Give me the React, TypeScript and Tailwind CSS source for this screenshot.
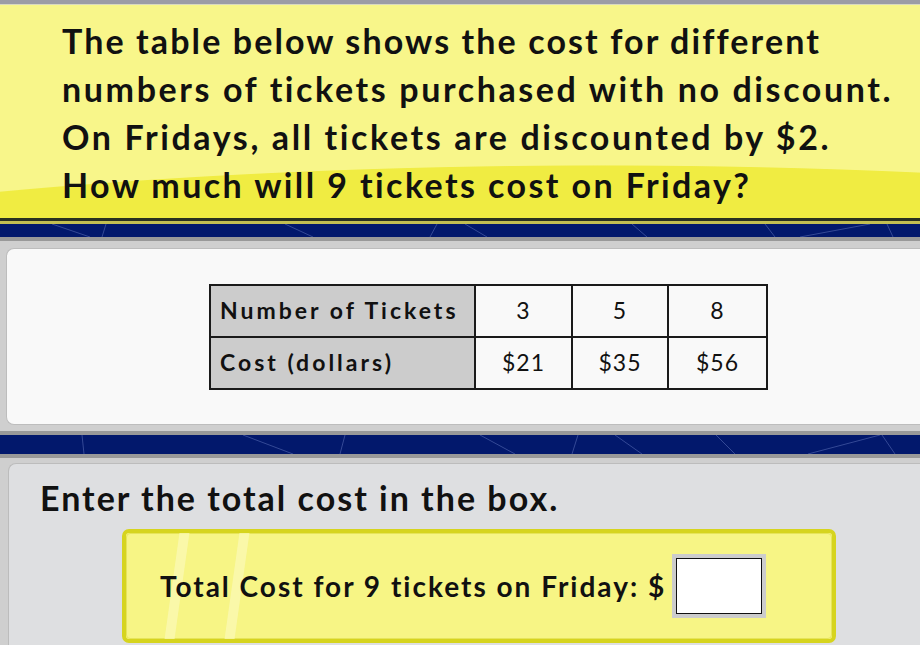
import React from "react";

function NavyStrip({ h, lines }: { h: number; lines: [number, number, number, number][] }) {
  return (
    <div className="w-full bg-[#02186c]" style={{ height: h }}>
      <svg width="920" height={h} viewBox={`0 0 920 ${h}`} className="block">
        {lines.map((l, i) => (
          <line key={i} x1={l[0]} y1={l[1]} x2={l[2]} y2={l[3]} stroke="#4a5ea8" strokeWidth="1" opacity="0.7" />
        ))}
      </svg>
    </div>
  );
}

export default function App() {
  const font = { fontFamily: "Lato, 'Open Sans', sans-serif" };
  return (
    <div className="w-[920px] h-[645px] overflow-hidden bg-[#cfcfcf]" style={font}>
      <div className="h-[4px] bg-[#9c9ca6]" />
      <div className="h-[1px] bg-[#d9d9c0]" />
      <div className="h-[213px] pl-[62px] pt-[12px] bg-[radial-gradient(ellipse_1300px_232px_at_600px_392px,#f0ec42_99.6%,#f8f68a_100%)] text-[#111] font-bold text-[34px] leading-[48px] tracking-[2.1px]">
        <div>The table below shows the cost for different</div>
        <div className="tracking-[2.6px]">numbers of tickets purchased with no discount.</div>
        <div className="tracking-[2.6px]">On Fridays, all tickets are discounted by $2.</div>
        <div className="tracking-[2.4px]">How much will 9 tickets cost on Friday?</div>
      </div>
      <div className="h-[3px] bg-[#2a3120]" />
      <div className="h-[3px] bg-[#c2be52]" />
      <NavyStrip
        h={13}
        lines={[
          [52, 0, 90, 13],
          [106, 0, 102, 13],
          [285, 0, 313, 13],
          [437, 0, 430, 13],
          [465, 0, 487, 13],
          [632, 0, 647, 13],
          [765, 0, 775, 13],
          [800, 13, 870, 0],
          [887, 0, 893, 13],
        ]}
      />
      <div className="h-[4px] bg-[#999999]" />
      <div className="pt-[7px] pl-[6px] pb-[6px] bg-[#cfcfcf]">
        <div className="h-[177px] rounded-l-[8px] bg-[#f9f9f9] border border-r-0 border-[#bdbdbd] flex items-center pl-[202px]">
          <table className="border-collapse border-2 border-[#1a1a1a] text-[23px] text-[#111]">
            <tbody>
              <tr className="h-[52px]">
                <td className="w-[265px] bg-[#cccccc] border-2 border-[#1a1a1a] pl-[9px] font-bold tracking-[3px]">Number of Tickets</td>
                <td className="w-[97px] border-2 border-[#1a1a1a] text-center tracking-[1px]">3</td>
                <td className="w-[96px] border-2 border-[#1a1a1a] text-center tracking-[1px]">5</td>
                <td className="w-[99px] border-2 border-[#1a1a1a] text-center tracking-[1px]">8</td>
              </tr>
              <tr className="h-[52px]">
                <td className="bg-[#cccccc] border-2 border-[#1a1a1a] pl-[9px] font-bold tracking-[3px]">Cost (dollars)</td>
                <td className="border-2 border-[#1a1a1a] text-center tracking-[1px]">$21</td>
                <td className="border-2 border-[#1a1a1a] text-center tracking-[1px]">$35</td>
                <td className="border-2 border-[#1a1a1a] text-center tracking-[1px]">$56</td>
              </tr>
            </tbody>
          </table>
        </div>
      </div>
      <div className="h-[4px] bg-[#999999]" />
      <NavyStrip
        h={19}
        lines={[
          [82, 0, 84, 19],
          [243, 0, 293, 19],
          [345, 0, 340, 19],
          [480, 0, 515, 19],
          [578, 0, 572, 19],
          [615, 0, 642, 19],
          [716, 0, 735, 19],
          [808, 19, 880, 0],
          [882, 0, 895, 19],
        ]}
      />
      <div className="h-[4px] bg-[#999999]" />
      <div className="pt-[5px] pl-[8px] bg-[#cfcfcf]">
        <div className="h-[200px] rounded-tl-[8px] bg-[#dedfe1] border-l border-t border-[#bcbcbc] pl-[31px] pt-[14px]">
          <div className="text-[34px] font-bold leading-[40px] tracking-[2px] text-[#111]">Enter the total cost in the box.</div>
          <div className="ml-[82px] mt-[11px] w-[714px] h-[114px] rounded-[7px] border-[4px] border-[#d6d41e] bg-[#f7f585] relative overflow-hidden">
            <div className="absolute inset-0 rounded-[4px] border border-[#e6e45a]" />
            <div className="absolute top-0 bottom-0 left-[46px] w-[10px] bg-[#fbfab8] opacity-70 skew-x-[-8deg]" />
            <div className="absolute top-0 bottom-0 left-[106px] w-[10px] bg-[#fbfab8] opacity-70 skew-x-[-8deg]" />
            <div className="relative h-full flex items-center pl-[34px]">
              <span className="text-[28px] font-bold tracking-[2px] text-[#111]">Total Cost for 9 tickets on Friday: $</span>
              <div className="ml-[6px] p-[4px] bg-[#cccccc]">
                <div className="w-[86px] h-[56px] bg-white border border-[#111]" />
              </div>
            </div>
          </div>
        </div>
      </div>
    </div>
  );
}
